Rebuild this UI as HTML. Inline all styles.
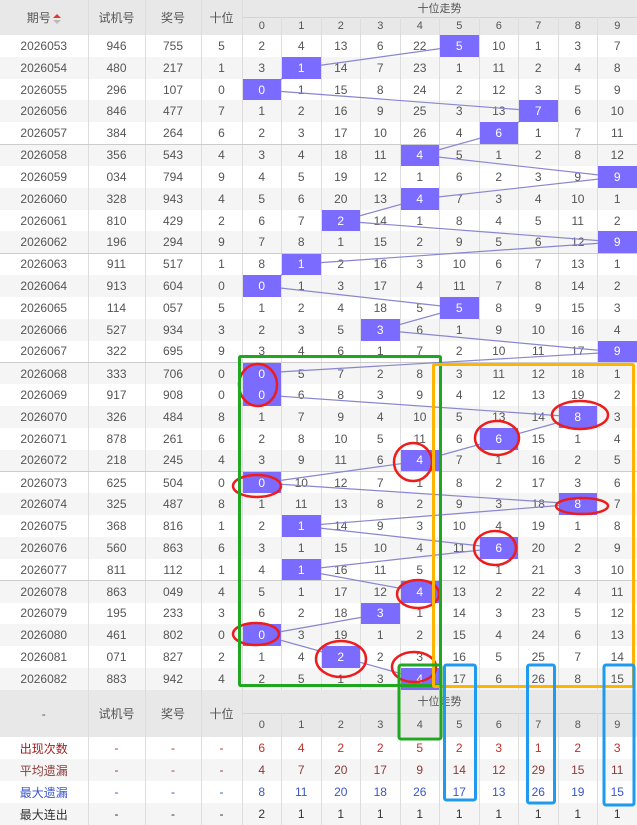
<!DOCTYPE html>
<html><head><meta charset="utf-8"><style>
*{margin:0;padding:0;box-sizing:border-box}
body{width:637px;height:820px;overflow:hidden;background:#fff;font-family:"Liberation Sans","Noto Sans CJK SC",sans-serif;font-size:12px;color:#555;position:relative}
table{border-collapse:collapse;table-layout:fixed;width:637px;position:absolute;left:0}
td,th{text-align:center;border-right:1px solid #ddd;padding:0;font-weight:normal;overflow:hidden;white-space:nowrap}
th{background:#e8e8e8;color:#555}
#t1{top:0}
#t1 tr.h1{height:17px}#t1 tr.h2{height:18px}
#t1 tr.h2 th{font-size:11px;border-top:1px solid #d4d4d4}
#t1 th.l{font-size:12px}
#t1 tbody tr{height:21.83px}
#t1 tbody tr:nth-child(even){background:#f5f5f5}
#t1 tbody tr.g td{border-bottom:1px solid #ccc}
td.h{background:#7b6bff;color:#fff;position:relative;z-index:2}
#t2{top:690px}
#t2 tr.h1{height:23px}#t2 tr.h2{height:24px}
#t2 tr.h2 th{font-size:11px;border-top:1px solid #d4d4d4}
#t2 tbody tr{height:22px}
#t2 tbody tr:nth-child(even){background:#f5f5f5}
.r1 td{color:#c0302b}.r1 td:first-child{color:#a52020}
.r2 td{color:#8b3a3a}
.r3 td{color:#3b55c8}
.r4 td{color:#333}
.s{display:inline-block;vertical-align:middle;width:8px;height:10px;position:relative;margin-left:2px}
.s:before{content:"";position:absolute;left:0;top:0;border:4px solid transparent;border-bottom:4px solid #e33;border-top:0}
.s:after{content:"";position:absolute;left:0;top:6px;border:4px solid transparent;border-top:4px solid #bbb;border-bottom:0}
svg{position:absolute;left:0;top:0}
#lines{z-index:1}#ann{z-index:3}
</style></head><body>
<table id="t1">
<colgroup><col style="width:88px"><col style="width:57px"><col style="width:56px"><col style="width:41px"><col style="width:39.5px"><col style="width:39.5px"><col style="width:39.5px"><col style="width:39.5px"><col style="width:39.5px"><col style="width:39.5px"><col style="width:39.5px"><col style="width:39.5px"><col style="width:39.5px"><col style="width:39.5px"></colgroup>
<thead>
<tr class="h1"><th class="l" rowspan="2">期号<span class="s"></span></th><th class="l" rowspan="2">试机号</th><th class="l" rowspan="2">奖号</th><th class="l" rowspan="2">十位</th><th colspan="10" style="font-size:11px">十位走势</th></tr>
<tr class="h2"><th>0</th><th>1</th><th>2</th><th>3</th><th>4</th><th>5</th><th>6</th><th>7</th><th>8</th><th>9</th></tr>
</thead>
<tbody>
<tr><td>2026053</td><td>946</td><td>755</td><td>5</td><td>2</td><td>4</td><td>13</td><td>6</td><td>22</td><td class="h">5</td><td>10</td><td>1</td><td>3</td><td>7</td></tr>
<tr><td>2026054</td><td>480</td><td>217</td><td>1</td><td>3</td><td class="h">1</td><td>14</td><td>7</td><td>23</td><td>1</td><td>11</td><td>2</td><td>4</td><td>8</td></tr>
<tr><td>2026055</td><td>296</td><td>107</td><td>0</td><td class="h">0</td><td>1</td><td>15</td><td>8</td><td>24</td><td>2</td><td>12</td><td>3</td><td>5</td><td>9</td></tr>
<tr><td>2026056</td><td>846</td><td>477</td><td>7</td><td>1</td><td>2</td><td>16</td><td>9</td><td>25</td><td>3</td><td>13</td><td class="h">7</td><td>6</td><td>10</td></tr>
<tr class="g"><td>2026057</td><td>384</td><td>264</td><td>6</td><td>2</td><td>3</td><td>17</td><td>10</td><td>26</td><td>4</td><td class="h">6</td><td>1</td><td>7</td><td>11</td></tr>
<tr><td>2026058</td><td>356</td><td>543</td><td>4</td><td>3</td><td>4</td><td>18</td><td>11</td><td class="h">4</td><td>5</td><td>1</td><td>2</td><td>8</td><td>12</td></tr>
<tr><td>2026059</td><td>034</td><td>794</td><td>9</td><td>4</td><td>5</td><td>19</td><td>12</td><td>1</td><td>6</td><td>2</td><td>3</td><td>9</td><td class="h">9</td></tr>
<tr><td>2026060</td><td>328</td><td>943</td><td>4</td><td>5</td><td>6</td><td>20</td><td>13</td><td class="h">4</td><td>7</td><td>3</td><td>4</td><td>10</td><td>1</td></tr>
<tr><td>2026061</td><td>810</td><td>429</td><td>2</td><td>6</td><td>7</td><td class="h">2</td><td>14</td><td>1</td><td>8</td><td>4</td><td>5</td><td>11</td><td>2</td></tr>
<tr class="g"><td>2026062</td><td>196</td><td>294</td><td>9</td><td>7</td><td>8</td><td>1</td><td>15</td><td>2</td><td>9</td><td>5</td><td>6</td><td>12</td><td class="h">9</td></tr>
<tr><td>2026063</td><td>911</td><td>517</td><td>1</td><td>8</td><td class="h">1</td><td>2</td><td>16</td><td>3</td><td>10</td><td>6</td><td>7</td><td>13</td><td>1</td></tr>
<tr><td>2026064</td><td>913</td><td>604</td><td>0</td><td class="h">0</td><td>1</td><td>3</td><td>17</td><td>4</td><td>11</td><td>7</td><td>8</td><td>14</td><td>2</td></tr>
<tr><td>2026065</td><td>114</td><td>057</td><td>5</td><td>1</td><td>2</td><td>4</td><td>18</td><td>5</td><td class="h">5</td><td>8</td><td>9</td><td>15</td><td>3</td></tr>
<tr><td>2026066</td><td>527</td><td>934</td><td>3</td><td>2</td><td>3</td><td>5</td><td class="h">3</td><td>6</td><td>1</td><td>9</td><td>10</td><td>16</td><td>4</td></tr>
<tr class="g"><td>2026067</td><td>322</td><td>695</td><td>9</td><td>3</td><td>4</td><td>6</td><td>1</td><td>7</td><td>2</td><td>10</td><td>11</td><td>17</td><td class="h">9</td></tr>
<tr><td>2026068</td><td>333</td><td>706</td><td>0</td><td class="h">0</td><td>5</td><td>7</td><td>2</td><td>8</td><td>3</td><td>11</td><td>12</td><td>18</td><td>1</td></tr>
<tr><td>2026069</td><td>917</td><td>908</td><td>0</td><td class="h">0</td><td>6</td><td>8</td><td>3</td><td>9</td><td>4</td><td>12</td><td>13</td><td>19</td><td>2</td></tr>
<tr><td>2026070</td><td>326</td><td>484</td><td>8</td><td>1</td><td>7</td><td>9</td><td>4</td><td>10</td><td>5</td><td>13</td><td>14</td><td class="h">8</td><td>3</td></tr>
<tr><td>2026071</td><td>878</td><td>261</td><td>6</td><td>2</td><td>8</td><td>10</td><td>5</td><td>11</td><td>6</td><td class="h">6</td><td>15</td><td>1</td><td>4</td></tr>
<tr class="g"><td>2026072</td><td>218</td><td>245</td><td>4</td><td>3</td><td>9</td><td>11</td><td>6</td><td class="h">4</td><td>7</td><td>1</td><td>16</td><td>2</td><td>5</td></tr>
<tr><td>2026073</td><td>625</td><td>504</td><td>0</td><td class="h">0</td><td>10</td><td>12</td><td>7</td><td>1</td><td>8</td><td>2</td><td>17</td><td>3</td><td>6</td></tr>
<tr><td>2026074</td><td>325</td><td>487</td><td>8</td><td>1</td><td>11</td><td>13</td><td>8</td><td>2</td><td>9</td><td>3</td><td>18</td><td class="h">8</td><td>7</td></tr>
<tr><td>2026075</td><td>368</td><td>816</td><td>1</td><td>2</td><td class="h">1</td><td>14</td><td>9</td><td>3</td><td>10</td><td>4</td><td>19</td><td>1</td><td>8</td></tr>
<tr><td>2026076</td><td>560</td><td>863</td><td>6</td><td>3</td><td>1</td><td>15</td><td>10</td><td>4</td><td>11</td><td class="h">6</td><td>20</td><td>2</td><td>9</td></tr>
<tr class="g"><td>2026077</td><td>811</td><td>112</td><td>1</td><td>4</td><td class="h">1</td><td>16</td><td>11</td><td>5</td><td>12</td><td>1</td><td>21</td><td>3</td><td>10</td></tr>
<tr><td>2026078</td><td>863</td><td>049</td><td>4</td><td>5</td><td>1</td><td>17</td><td>12</td><td class="h">4</td><td>13</td><td>2</td><td>22</td><td>4</td><td>11</td></tr>
<tr><td>2026079</td><td>195</td><td>233</td><td>3</td><td>6</td><td>2</td><td>18</td><td class="h">3</td><td>1</td><td>14</td><td>3</td><td>23</td><td>5</td><td>12</td></tr>
<tr><td>2026080</td><td>461</td><td>802</td><td>0</td><td class="h">0</td><td>3</td><td>19</td><td>1</td><td>2</td><td>15</td><td>4</td><td>24</td><td>6</td><td>13</td></tr>
<tr><td>2026081</td><td>071</td><td>827</td><td>2</td><td>1</td><td>4</td><td class="h">2</td><td>2</td><td>3</td><td>16</td><td>5</td><td>25</td><td>7</td><td>14</td></tr>
<tr><td>2026082</td><td>883</td><td>942</td><td>4</td><td>2</td><td>5</td><td>1</td><td>3</td><td class="h">4</td><td>17</td><td>6</td><td>26</td><td>8</td><td>15</td></tr>
</tbody></table>
<table id="t2">
<colgroup><col style="width:88px"><col style="width:57px"><col style="width:56px"><col style="width:41px"><col style="width:39.5px"><col style="width:39.5px"><col style="width:39.5px"><col style="width:39.5px"><col style="width:39.5px"><col style="width:39.5px"><col style="width:39.5px"><col style="width:39.5px"><col style="width:39.5px"><col style="width:39.5px"></colgroup>
<thead>
<tr class="h1"><th rowspan="2">-</th><th rowspan="2">试机号</th><th rowspan="2">奖号</th><th rowspan="2">十位</th><th colspan="10" style="font-size:11px">十位走势</th></tr>
<tr class="h2"><th>0</th><th>1</th><th>2</th><th>3</th><th>4</th><th>5</th><th>6</th><th>7</th><th>8</th><th>9</th></tr>
</thead>
<tbody>
<tr class="r1"><td>出现次数</td><td>-</td><td>-</td><td>-</td><td>6</td><td>4</td><td>2</td><td>2</td><td>5</td><td>2</td><td>3</td><td>1</td><td>2</td><td>3</td></tr>
<tr class="r2"><td>平均遗漏</td><td>-</td><td>-</td><td>-</td><td>4</td><td>7</td><td>20</td><td>17</td><td>9</td><td>14</td><td>12</td><td>29</td><td>15</td><td>11</td></tr>
<tr class="r3"><td>最大遗漏</td><td>-</td><td>-</td><td>-</td><td>8</td><td>11</td><td>20</td><td>18</td><td>26</td><td>17</td><td>13</td><td>26</td><td>19</td><td>15</td></tr>
<tr class="r4"><td>最大连出</td><td>-</td><td>-</td><td>-</td><td>2</td><td>1</td><td>1</td><td>1</td><td>1</td><td>1</td><td>1</td><td>1</td><td>1</td><td>1</td></tr>
</tbody></table>
<svg id="lines" width="637" height="820" viewBox="0 0 637 820">
<polyline fill="none" stroke="#8a86d0" stroke-width="1.2" points="459,46 301,68 262,90 538,111 499,133 420,155 617,177 420,199 341,221 617,242 301,264 262,286 459,308 380,330 617,352 262,373 262,395 578,417 499,439 420,461 262,483 578,504 301,526 499,548 301,570 420,592 380,614 262,635 341,657 420,679"/>
</svg>
<svg id="ann" width="637" height="820" viewBox="0 0 637 820">
<g fill="none" stroke="#ee1c1c" stroke-width="2.5">
<ellipse cx="258" cy="385" rx="19" ry="21"/>
<ellipse cx="580" cy="415" rx="28" ry="14"/>
<ellipse cx="497" cy="438" rx="22" ry="17"/>
<ellipse cx="413" cy="462" rx="19" ry="19"/>
<ellipse cx="257" cy="486" rx="24" ry="11"/>
<ellipse cx="582" cy="506" rx="26" ry="8"/>
<ellipse cx="495" cy="548" rx="21" ry="17"/>
<ellipse cx="418" cy="594" rx="21" ry="14"/>
<ellipse cx="256" cy="634" rx="23" ry="11"/>
<ellipse cx="341" cy="659" rx="25" ry="18"/>
<ellipse cx="414" cy="667" rx="22" ry="15"/>
</g>
<rect x="239.5" y="356.5" width="201" height="329" fill="none" stroke="#1fa81f" stroke-width="3" rx="1"/>
<rect x="433.5" y="364.5" width="200" height="322" fill="none" stroke="#ffb400" stroke-width="3" rx="1"/>
<rect x="399" y="665" width="42" height="74" fill="none" stroke="#1fa81f" stroke-width="3" rx="2"/>
<rect x="444.5" y="665" width="31" height="135" fill="none" stroke="#1e9bf0" stroke-width="3" rx="2"/>
<rect x="527.5" y="665" width="27" height="138" fill="none" stroke="#1e9bf0" stroke-width="3" rx="2"/>
<rect x="604" y="665" width="30" height="140" fill="none" stroke="#1e9bf0" stroke-width="3" rx="2"/>
</svg>
</body></html>
